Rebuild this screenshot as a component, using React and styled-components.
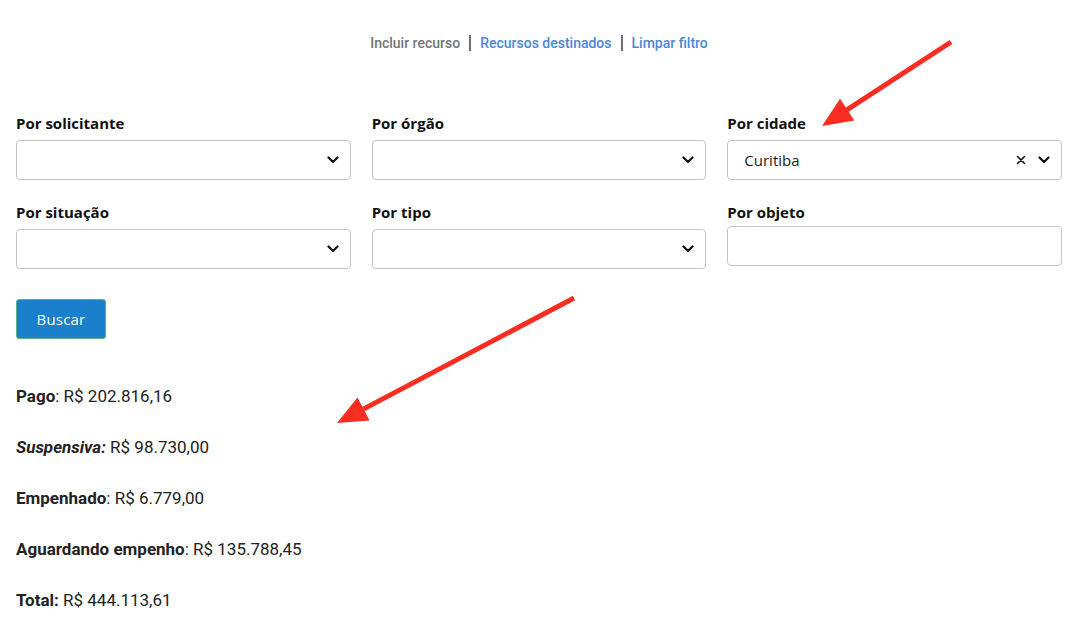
import React from "react";
import styled, { createGlobalStyle } from "styled-components";

const GlobalStyle = createGlobalStyle`
  html, body {
    margin: 0;
    padding: 0;
    background: #ffffff;
  }
  body {
    font-family: "Open Sans", "DejaVu Sans", sans-serif;
    color: #111;
  }
`;

const labelFont = `"Open Sans", "DejaVu Sans", sans-serif`;
const roboto = `Roboto, "Liberation Sans", sans-serif`;

const Page = styled.div`
  position: relative;
  width: 1077px;
  height: 634px;
  box-sizing: border-box;
  padding: 32px 15px 0 16px;
  overflow: hidden;
`;

const TopLinks = styled.nav`
  display: flex;
  justify-content: center;
  align-items: center;
  gap: 9px;
  font-family: ${roboto};
  font-size: 14px;
  font-weight: 500;
  height: 22px;
  padding-left: 0;
`;

const NavLink = styled.a`
  color: ${(p) => (p.$muted ? "#757575" : "#4b86d9")};
  text-decoration: none;
  cursor: pointer;
`;

const Divider = styled.span`
  display: inline-block;
  width: 2px;
  height: 16px;
  background: #6f6f6f;
`;

const FilterGrid = styled.div`
  display: grid;
  grid-template-columns: repeat(3, 1fr);
  column-gap: 21px;
  row-gap: 22px;
  margin-top: 59px;
`;

const Field = styled.div`
  display: flex;
  flex-direction: column;
`;

const Label = styled.label`
  font-family: ${labelFont};
  font-weight: 700;
  font-size: 15px;
  color: #111;
  height: 20px;
  line-height: 20px;
  margin-bottom: ${(p) => (p.$tight ? "4px" : "7px")};
`;

const SelectBox = styled.div`
  display: flex;
  align-items: center;
  height: 40px;
  box-sizing: border-box;
  border: 1px solid #c4c4c4;
  border-radius: 4px;
  background: #fff;
  padding: 0 10px 0 16px;
`;

const SelectValue = styled.span`
  flex: 1;
  font-family: ${labelFont};
  font-size: 15px;
  color: #1a1a1a;
`;

const IconSlot = styled.span`
  display: flex;
  align-items: center;
  justify-content: center;
  width: ${(p) => p.$w || 14}px;
  margin-left: ${(p) => p.$gap || 0}px;
`;

const TextInput = styled.input`
  height: 40px;
  box-sizing: border-box;
  border: 1px solid #c4c4c4;
  border-radius: 4px;
  padding: 0 12px;
  font-family: ${labelFont};
  font-size: 14px;
  outline: none;
`;

const SearchButton = styled.button`
  margin-top: 30px;
  width: 90px;
  height: 40px;
  background: #1a80cb;
  border: 1px solid #5fae8a;
  border-radius: 3px;
  color: #fff;
  font-family: ${labelFont};
  font-size: 15px;
  letter-spacing: 0.2px;
  cursor: pointer;
`;

const Totals = styled.div`
  margin-top: 47px;
  display: flex;
  flex-direction: column;
  gap: 31px;
  font-family: ${roboto};
  font-size: 17px;
  color: #222;
`;

const TotalLine = styled.div`
  height: 20px;
  line-height: 20px;
`;

const Key = styled.span`
  font-weight: 700;
  font-style: ${(p) => (p.$italic ? "italic" : "normal")};
`;

const Overlay = styled.svg`
  position: absolute;
  left: 0;
  top: 0;
  pointer-events: none;
`;

const Chevron = () => (
  <svg width="12" height="8" viewBox="0 0 12 8">
    <path d="M1.5 1.5 L6 6 L10.5 1.5" fill="none" stroke="#111" strokeWidth="2.2" strokeLinecap="round" strokeLinejoin="round" />
  </svg>
);

const Cross = () => (
  <svg width="10" height="10" viewBox="0 0 10 10">
    <path d="M1.5 1.5 L8.5 8.5 M8.5 1.5 L1.5 8.5" fill="none" stroke="#111" strokeWidth="1.6" strokeLinecap="round" />
  </svg>
);

const Select = ({ value }) => (
  <SelectBox>
    <SelectValue>{value}</SelectValue>
    {value && (
      <IconSlot $w={12}>
        <Cross />
      </IconSlot>
    )}
    <IconSlot $w={14} $gap={value ? 10 : 0}>
      <Chevron />
    </IconSlot>
  </SelectBox>
);

const totals = [
  { key: "Pago", sep: ":", rest: " R$ 202.816,16" },
  { key: "Suspensiva:", italic: true, rest: " R$ 98.730,00" },
  { key: "Empenhado", sep: ":", rest: " R$ 6.779,00" },
  { key: "Aguardando empenho", sep: ":", rest: " R$ 135.788,45" },
  { key: "Total:", rest: " R$ 444.113,61" },
];

const Arrow = ({ x1, y1, x2, y2 }) => {
  const dx = x2 - x1;
  const dy = y2 - y1;
  const len = Math.sqrt(dx * dx + dy * dy);
  const ux = dx / len;
  const uy = dy / len;
  const headLen = 30;
  const headW = 13;
  const bx = x2 - ux * headLen;
  const by = y2 - uy * headLen;
  const px = -uy;
  const py = ux;
  return (
    <g>
      <line x1={x1} y1={y1} x2={bx + ux * 4} y2={by + uy * 4} stroke="#fb2c20" strokeWidth="5" />
      <polygon
        points={`${x2},${y2} ${bx + px * headW},${by + py * headW} ${bx - px * headW},${by - py * headW}`}
        fill="#fb2c20"
      />
    </g>
  );
};

export default function App() {
  return (
    <>
      <GlobalStyle />
      <Page>
        <TopLinks>
          <NavLink $muted>Incluir recurso</NavLink>
          <Divider />
          <NavLink>Recursos destinados</NavLink>
          <Divider />
          <NavLink>Limpar filtro</NavLink>
        </TopLinks>

        <FilterGrid>
          <Field>
            <Label>Por solicitante</Label>
            <Select />
          </Field>
          <Field>
            <Label>Por órgão</Label>
            <Select />
          </Field>
          <Field>
            <Label>Por cidade</Label>
            <Select value="Curitiba" />
          </Field>
          <Field>
            <Label>Por situação</Label>
            <Select />
          </Field>
          <Field>
            <Label>Por tipo</Label>
            <Select />
          </Field>
          <Field>
            <Label $tight>Por objeto</Label>
            <TextInput />
          </Field>
        </FilterGrid>

        <SearchButton>Buscar</SearchButton>

        <Totals>
          {totals.map((t) => (
            <TotalLine key={t.key}>
              <Key $italic={t.italic}>{t.key}</Key>
              {t.sep}
              {t.rest}
            </TotalLine>
          ))}
        </Totals>

        <Overlay width="1077" height="634">
          <Arrow x1={951} y1={42} x2={822} y2={126} />
          <Arrow x1={574} y1={298} x2={337} y2={423} />
        </Overlay>
      </Page>
    </>
  );
}
